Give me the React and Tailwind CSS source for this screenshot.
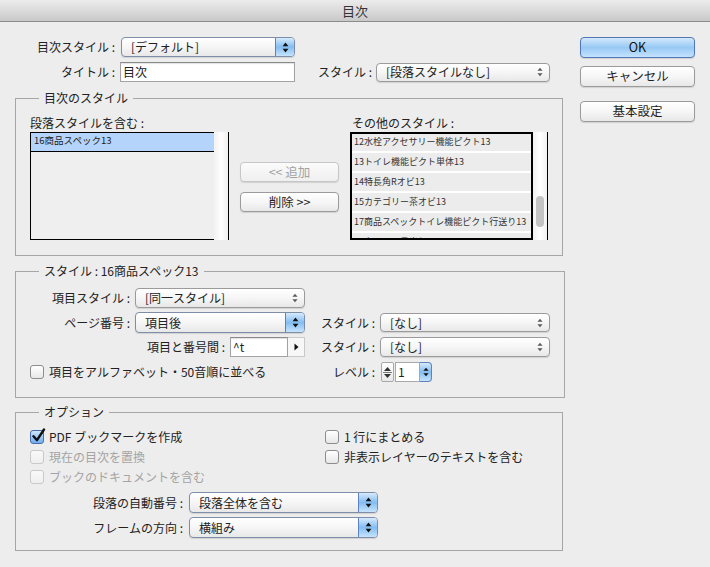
import React from "react";
import clsx from "clsx";

function Arrows({ color = "#111", small = false }) {
  if (small) {
    return (
      <svg width="6" height="10" viewBox="0 0 6 10">
        <path d="M3 0.8 L5.6 3.8 L0.4 3.8Z" fill={color} />
        <path d="M0.4 6.2 L5.6 6.2 L3 9.2Z" fill={color} />
      </svg>
    );
  }
  return (
    <svg width="7" height="11" viewBox="0 0 7 11">
      <path d="M3.5 0.6 L6.4 4.2 L0.6 4.2Z" fill={color} />
      <path d="M0.6 6.8 L6.4 6.8 L3.5 10.4Z" fill={color} />
    </svg>
  );
}

function Popup({ className, text, blue = false }) {
  return (
    <div
      className={clsx(
        "flex items-stretch rounded-[4px] border bg-linear-to-b from-white via-[#f6f6f6] to-[#e8e8e8] shadow-[0_1px_1px_rgba(0,0,0,0.12)]",
        blue ? "border-[#7f8ea8]" : "border-[#9b9b9b]",
        className
      )}
    >
      <div className="flex flex-1 items-center overflow-hidden whitespace-nowrap pl-[9px] leading-none">{text}</div>
      {blue ? (
        <div className="flex w-[19px] items-center justify-center rounded-r-[3px] border-l border-[#5c82c2] bg-linear-to-b from-[#d6eafc] via-[#84bdf1] to-[#c6e4fd]">
          <Arrows color="#111" />
        </div>
      ) : (
        <div className="flex w-[19px] items-center justify-center">
          <Arrows color="#5a5a5a" small />
        </div>
      )}
    </div>
  );
}

function Button({ className, children, primary = false, disabled = false }) {
  return (
    <div
      className={clsx(
        "flex items-center justify-center rounded-[4px] border text-[12.5px] leading-none shadow-[0_1px_1px_rgba(0,0,0,0.12)]",
        primary
          ? "border-[#5277b5] bg-linear-to-b from-[#d3e8fc] via-[#97c9f4] to-[#c3e2fd] text-[#111]"
          : disabled
          ? "border-[#c6c6c6] bg-linear-to-b from-[#fbfbfb] to-[#efefef] text-[#a3a3a3]"
          : "border-[#9b9b9b] bg-linear-to-b from-white via-[#f6f6f6] to-[#e8e8e8] text-[#1e1e1e]",
        className
      )}
    >
      {children}
    </div>
  );
}

function Check({ checked = false, disabled = false }) {
  return (
    <div className="relative h-[14px] w-[14px] shrink-0">
      <div
        className={clsx(
          "h-[14px] w-[14px] rounded-[3px] border",
          checked
            ? "border-[#4a6ea9] bg-linear-to-b from-[#cfe5fb] to-[#6eaef0]"
            : disabled
            ? "border-[#c9c9c9] bg-linear-to-b from-[#f9f9f9] to-[#efefef]"
            : "border-[#8d8d8d] bg-linear-to-b from-white to-[#e7e7e7]"
        )}
      />
      {checked && (
        <svg className="absolute left-[1px] top-[-2px]" width="15" height="15" viewBox="0 0 15 15">
          <path d="M2.5 8.2 L6 12.2 L13 1.5" fill="none" stroke="#111" strokeWidth="2.4" strokeLinecap="round" strokeLinejoin="round" />
        </svg>
      )}
    </div>
  );
}

function CheckRow({ checked, disabled, children }) {
  return (
    <div className={clsx("flex h-[16px] items-center gap-[5px] whitespace-nowrap", disabled ? "text-[#a4a4a4]" : "text-[#222]")}>
      <Check checked={checked} disabled={disabled} />
      <span>{children}</span>
    </div>
  );
}

function Group({ title, className, children }) {
  return (
    <fieldset className={clsx("border border-[#a6a6a6] px-[14px]", className)}>
      <legend className="ml-[9px] px-[5px] leading-[16px] text-[#222]">{title}</legend>
      {children}
    </fieldset>
  );
}

const others = [
  "12水栓アクセサリー機能ピクト13",
  "13トイレ機能ピクト単体13",
  "14特長角Rオビ13",
  "15カテゴリー茶オビ13",
  "17商品スペックトイレ機能ピクト行送り13",
  "20タイトル見出し13",
];

export default function App() {
  return (
    <div className="flex h-[567px] w-[710px] flex-col bg-[#ededed] font-['Noto_Sans_CJK_JP','Noto_Sans',sans-serif] text-[12px] text-[#222]">
      <div className="flex h-[22px] shrink-0 items-center justify-center border-b border-[#8c8c8c] bg-linear-to-b from-[#ececec] to-[#c9c9c9] text-[13px] text-[#333]">
        目次
      </div>
      <div className="flex pl-[15px] pt-[15px]">
        {/* left column */}
        <div className="flex w-[548px] flex-col">
          <div className="flex h-[20px] items-center">
            <div className="w-[100px] text-right">目次スタイル :</div>
            <Popup className="ml-[6px] h-[20px] w-[174px]" text="[デフォルト]" blue />
          </div>
          <div className="mt-[5px] flex h-[20px] items-center">
            <div className="w-[100px] text-right">タイトル :</div>
            <div className="ml-[5px] flex h-[20px] w-[175px] items-center border border-[#a3a3a3] border-t-[#8a8a8a] bg-white pl-[2px] shadow-[inset_0_1px_1px_rgba(0,0,0,0.12)]">
              目次
            </div>
            <div className="w-[77px] text-right">スタイル :</div>
            <Popup className="ml-[4px] h-[19px] w-[174px]" text="[段落スタイルなし]" />
          </div>

          <Group title="目次のスタイル" className="mt-[8px] pb-[15px] pt-[9px]">
            <div className="flex">
              <div className="flex w-[199px] flex-col">
                <div className="h-[16px] leading-[16px]">段落スタイルを含む :</div>
                <div className="mt-[1px] flex h-[108px]">
                  <div className="w-[184px] border-b border-l border-t border-black bg-[#efefef]">
                    <div className="h-[19px] border-b border-black bg-[#b5d4fb] pl-[3px] text-[9.5px] leading-[14px] text-[#222]">
                      16商品スペック13
                    </div>
                  </div>
                  <div className="w-[14px] bg-linear-to-r from-[#f1f1f1] via-white to-[#f1f1f1]" />
                  <div className="w-px bg-black" />
                </div>
              </div>
              <div className="ml-[11px] flex w-[99px] flex-col pt-[47px]">
                <Button className="h-[20px]" disabled>
                  &lt;&lt; 追加
                </Button>
                <Button className="mt-[10px] h-[20px]">削除 &gt;&gt;</Button>
              </div>
              <div className="ml-[11px] flex w-[198px] flex-col">
                <div className="h-[16px] pl-[2px] leading-[16px]">その他のスタイル :</div>
                <div className="mt-[1px] flex h-[108px]">
                  <div className="w-[184px] overflow-hidden border-2 border-black bg-white">
                    <div className="-mt-[1px]">
                      {others.map((o) => (
                        <div
                          key={o}
                          className="flex h-[20px] items-center whitespace-nowrap border-b-2 border-white bg-[#ececec] pb-[2px] pl-[2px] text-[9px] leading-none text-[#333]"
                        >
                          {o}
                        </div>
                      ))}
                    </div>
                  </div>
                  <div className="flex w-[14px] flex-col bg-linear-to-r from-[#f1f1f1] via-white to-[#f1f1f1] px-[3px] pt-[64px]">
                    <div className="h-[31px] rounded-full bg-[#c3c3c3]" />
                  </div>
                  <div className="w-px bg-black" />
                </div>
              </div>
            </div>
          </Group>

          <Group title="スタイル : 16商品スペック13" className="mt-[7px] pb-[15px] pt-[9px]">
            <div className="flex h-[20px] items-center">
              <div className="w-[100px] text-right">項目スタイル :</div>
              <Popup className="ml-[5px] h-[20px] w-[170px]" text="[同一スタイル]" />
            </div>
            <div className="mt-[4px] flex h-[21px] items-center">
              <div className="flex w-[290px] items-center">
                <div className="w-[100px] text-right">ページ番号 :</div>
                <Popup className="ml-[5px] h-[21px] w-[170px]" text="項目後" blue />
              </div>
              <div className="w-[55px] text-right">スタイル :</div>
              <Popup className="ml-[5px] h-[19px] w-[170px]" text="[なし]" />
            </div>
            <div className="mt-[4px] flex h-[20px] items-center">
              <div className="flex w-[290px] items-center">
                <div className="w-[195px] text-right">項目と番号間 :</div>
                <div className="ml-[5px] flex h-[20px] w-[58px] items-center border border-[#a3a3a3] border-t-[#8a8a8a] bg-white pl-[2px] shadow-[inset_0_1px_1px_rgba(0,0,0,0.12)]">
                  ^t
                </div>
                <div className="flex h-[20px] w-[17px] items-center justify-center border border-l-0 border-[#c9c9c9] bg-[#f7f7f7]">
                  <svg width="5" height="8" viewBox="0 0 5 8">
                    <path d="M0.5 0.5 L4.5 4 L0.5 7.5Z" fill="#111" />
                  </svg>
                </div>
              </div>
              <div className="w-[55px] text-right">スタイル :</div>
              <Popup className="ml-[5px] h-[20px] w-[170px]" text="[なし]" />
            </div>
            <div className="mt-[5px] flex h-[20px] items-center">
              <div className="flex w-[290px] items-center">
                <CheckRow>項目をアルファベット・50音順に並べる</CheckRow>
              </div>
              <div className="w-[55px] text-right">レベル :</div>
              <div className="ml-[6px] flex h-[20px] items-stretch">
                <div className="flex w-[13px] flex-col items-center justify-center gap-[1px] rounded-[2px] border border-[#a8a8a8] bg-linear-to-b from-white to-[#e9e9e9]">
                  <svg width="7" height="4" viewBox="0 0 7 4">
                    <path d="M3.5 0 L7 4 L0 4Z" fill="#333" />
                  </svg>
                  <div className="h-px w-[9px] bg-[#777]" />
                  <svg width="7" height="4" viewBox="0 0 7 4">
                    <path d="M0 0 L7 0 L3.5 4Z" fill="#333" />
                  </svg>
                </div>
                <div className="ml-[1px] flex w-[25px] items-center border border-[#a8a8a8] bg-white pl-[2px]">1</div>
                <div className="flex w-[12px] items-center justify-center rounded-r-[4px] border border-l-0 border-[#5c82c2] bg-linear-to-b from-[#d6eafc] via-[#84bdf1] to-[#c6e4fd]">
                  <Arrows color="#111" small />
                </div>
              </div>
            </div>
          </Group>

          <Group title="オプション" className="mt-[6px] pb-[12px] pt-[9px]">
            <div className="flex">
              <div className="flex w-[295px] flex-col gap-[4px]">
                <CheckRow checked>PDF ブックマークを作成</CheckRow>
                <CheckRow disabled>現在の目次を置換</CheckRow>
                <CheckRow disabled>ブックのドキュメントを含む</CheckRow>
              </div>
              <div className="flex flex-col gap-[4px]">
                <CheckRow>1 行にまとめる</CheckRow>
                <CheckRow>非表示レイヤーのテキストを含む</CheckRow>
              </div>
            </div>
            <div className="mt-[7px] flex h-[21px] items-center">
              <div className="w-[153px] text-right">段落の自動番号 :</div>
              <Popup className="ml-[6px] h-[21px] w-[189px]" text="段落全体を含む" blue />
            </div>
            <div className="mt-[4px] flex h-[21px] items-center">
              <div className="w-[153px] text-right">フレームの方向 :</div>
              <Popup className="ml-[6px] h-[21px] w-[189px]" text="横組み" blue />
            </div>
          </Group>
        </div>

        {/* right column */}
        <div className="ml-[17px] flex w-[115px] flex-col">
          <Button className="h-[21px]" primary>
            OK
          </Button>
          <Button className="mt-[8px] h-[21px]">キャンセル</Button>
          <Button className="mt-[14px] h-[21px]">基本設定</Button>
        </div>
      </div>
    </div>
  );
}
